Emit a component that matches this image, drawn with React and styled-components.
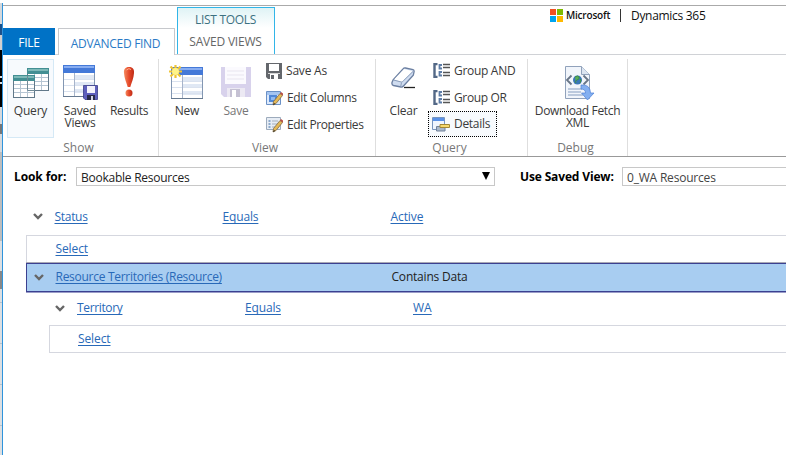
import React from "react";
import styled, { createGlobalStyle } from "styled-components";

const Global = createGlobalStyle`
  * { box-sizing: border-box; }
  body { margin: 0; background: #fff; overflow: hidden; font-family: "Open Sans", "Noto Sans", sans-serif; font-size: 12px; color: #333; }
  svg { display: block; flex: none; }
`;
const Page = styled.div`display: flex; width: 786px; height: 461px; padding: 3px 0 6px; overflow: hidden;`;
const Backdrop = styled.div`
  width: 2px; flex: none;
  background: linear-gradient(#d4d8dc 0 21px, #19508c 21px 32px, #d0d0d0 32px 47px, #000 47px 73px, #ddd 73px 75px, #000 75px 79px, #ddd 79px 81px, #000 81px 104px, #d5d9dd 104px 121px, #777 121px 131px, #d5d9dd 131px 149px, #bdbdbd 149px 238px, #dcdfe2 238px 268px, #888 268px 286px, #dcdfe2 286px 299px, #b9c2ca 299px 300px, #dcdfe2 300px 340px, #b9c2ca 340px 341px, #dcdfe2 341px 381px, #b9c2ca 381px 382px, #dcdfe2 382px 422px, #b9c2ca 422px 423px, #dcdfe2 423px);
`;
const Window = styled.main`width: 784px; flex: none; border-left: 1px solid #2f94dc; padding-top: 2px; background: #fff; display: flex; flex-direction: column;`;
const Header = styled.header`height: 50px; flex: none; border-top: 1px solid #aaa; border-bottom: 1px solid #d0d2d6; display: flex; align-items: flex-end;`;
const Tab = styled.div`
  height: 27px; line-height: 30px; text-align: center; margin-bottom: -1px;
  width: ${p => p.$w}px; letter-spacing: ${p => p.$ls || 0}px;
`;
const FileTab = styled(Tab)`background: #0072c6; color: #fff;`;
const ActiveTab = styled(Tab)`color: #2a7ac6; margin: 0 1px -1px 3px; padding-right: 2px; background: #fff; border: 1px solid #c6c8cc; border-bottom: 0;`;
const ToolTabs = styled.div`
  width: 98px; height: 47px; margin-left: 1px; padding-right: 1px; text-align: center; border: 1px solid #32b5e8; border-bottom: 0;
  background: linear-gradient(#dff3f5, #fff 20px); color: #666;
`;
const ToolTitle = styled.div`height: 22px; line-height: 24px; color: #3c7181; letter-spacing: -0.3px;`;
const ToolName = styled.div`height: 22px; line-height: 24px; letter-spacing: ${p => p.$ls}px;`;
const Brand = styled.div`align-self: flex-start; margin-left: 275px; height: 18px; display: flex; align-items: center; color: #111; white-space: nowrap;`;
const Microsoft = styled.span`font-size: 10px; font-weight: 600; letter-spacing: ${p => p.$ls}px; margin-left: 3px; width: 54px;`;
const BrandBar = styled.span`width: 1px; height: 13px; background: #333; margin-right: 10px;`;
const Dynamics = styled.span`font-size: 12px; font-weight: 500; letter-spacing: ${p => p.$ls}px;`;

const Ribbon = styled.section`height: 102px; flex: none; display: flex; border-bottom: 1px solid #999;`;
const Group = styled.div`
  width: ${p => p.$w}px; padding: 4px 0 0 ${p => p.$pad}px; display: flex; flex-direction: column;
  border-right: 1px solid; border-image: linear-gradient(transparent 5px, #dedede 5px) 1;
`;
const Tools = styled.div`display: flex; height: 79px;`;
const GroupName = styled.div`height: 18px; line-height: 19px; padding-right: 4px; text-align: center; color: #777; margin-left: -${p => p.$pad}px;`;
const BigButton = styled.div`
  width: ${p => p.$w}px; height: 79px; margin-left: ${p => p.$ml || 0}px; padding-top: 5px; border: 1px solid ${p => (p.$hot ? "#d5e9f6" : "transparent")};
  background: ${p => (p.$hot ? "#f7fafd" : "transparent")}; display: flex; flex-direction: column; align-items: center;
`;
const IconSlot = styled.div`height: 40px; display: flex; align-items: flex-start; padding-left: ${p => p.$dx || 0}px;`;
const BigLabel = styled.div`
  line-height: 11.5px; text-align: center; white-space: nowrap;
  color: ${p => (p.$off ? "#777" : "#3a3a3a")}; letter-spacing: ${p => p.$ls || 0}px;
`;
const Stack = styled.div`display: flex; flex-direction: column; margin-left: ${p => p.$ml}px; margin-top: -2px;`;
const SmallButton = styled.div`
  height: ${p => (p.$focus ? 26 : 27)}px; line-height: 24px; width: ${p => p.$w || 110}px; display: flex; align-items: center; gap: 4px; padding-left: ${p => p.$pl ?? 5}px; white-space: nowrap;
  color: #3a3a3a; letter-spacing: ${p => p.$ls || 0}px;
  border: 1px dotted ${p => (p.$focus ? "#000" : "transparent")}; background: ${p => (p.$focus ? "#f7fafd" : "transparent")};
`;

const Lookup = styled.div`height: 40px; flex: none; display: flex; padding: 10px 0 0 11px; overflow: hidden;`;
const FieldName = styled.div`width: ${p => p.$w}px; flex: none; line-height: 20px; font-weight: 700; color: #000; letter-spacing: ${p => p.$ls}px; white-space: nowrap;`;
const Field = styled.div`
  width: ${p => p.$w}px; flex: none; height: 19px; border: 1px solid #c8c8c8; padding: 0 4px; display: flex; justify-content: space-between;
  line-height: 19px; margin-right: 25px; letter-spacing: ${p => p.$ls}px; white-space: nowrap; color: ${p => (p.$soft ? "#444" : "#222")};
  svg { margin-top: 4px; }
`;
const Conditions = styled.div`padding-left: 23px; display: flex; flex-direction: column;`;
const Row = styled.div`
  display: grid; grid-template-columns: ${p => p.$cols}; align-items: center; flex: none;
  margin-left: ${p => p.$indent || 0}px; padding-left: ${p => p.$pad}px; padding-bottom: ${p => p.$pb || 0}px; height: ${p => p.$h}px; white-space: nowrap;
`;
const SelectRow = styled(Row)`border: 1px solid #d5d7df; border-right: 0;`;
const ActiveRow = styled(Row)`background: #a8cdf1; border: 1px solid #3b4090; box-shadow: 0 1px #9a9cc8 , 0 -1px #a9a9b5; border-right: 0; color: #222;`;
const Link = styled.a`
  color: #2869b8; text-decoration: underline; text-underline-offset: 2px; text-decoration-thickness: 1px; justify-self: start;
  text-decoration-skip-ink: none; letter-spacing: ${p => p.$ls || 0}px;
`;
const Words = styled.span`letter-spacing: ${p => p.$ls}px;`;

const Chevron = () => <svg width="10" height="8" viewBox="0 0 10 8"><path d="M1 2 5 6 9 2" fill="none" stroke="#666" strokeWidth="2.400" /></svg>;

const Sheet = ({ x, y, w, h, head, line, head2 }) => (
  <g transform={`translate(${x} ${y})`}>
    <rect x=".5" y=".5" width={w - 1} height={h - 1} fill="#fff" stroke={line} />
    <path d={`M1 9.500H${w - 1}M1 13.500H${w - 1}M1 17.500H${w - 1}M7.500 5V${h - 1}M14.500 5V${h - 1}`} stroke="#b5c5d3" />
    <rect width={w} height="6" fill={head} />
    <rect x="1" y="1" width={w - 2} height="2" fill={head2} />
  </g>
);
const QueryIcon = () => (
  <svg width="36" height="34" viewBox="0 0 36 34">
    <Sheet x={14} y={3} w={22} h={23} head="#438f93" head2="#7eb9b8" line="#61798a" />
    <Sheet x={0} y={10} w={22} h={23} head="#438f93" head2="#7eb9b8" line="#61798a" />
    <path d="M14.500 11V25.500H22" fill="none" stroke="#718b98" />
  </svg>
);
const TableBase = ({ x = 0, y = 0 }) => (
  <g transform={`translate(${x} ${y})`}>
    <rect x=".5" y=".5" width="31" height="31" fill="#fff" stroke="#8397b2" />
    <path d="M12 12H31M12 19H31M12 26H31" stroke="#e0e8f4" strokeWidth="4" />
    <path d="M1 14.500H31M1 20.500H31M1 26.500H31" stroke="#dae2ef" />
    <path d="M11.500 8V31" stroke="#a7b4ca" />
    <rect width="32" height="8" fill="#4479d8" />
    <path d="M1 2H31" stroke="#88adf1" strokeWidth="2" />
    <path d="M0 31.500H32" stroke="#667990" />
  </g>
);
const SavedIcon = () => (
  <svg width="36" height="36" viewBox="0 0 36 36">
    <TableBase />
    <path d="M20.500 20.500h14v14H22l-1.500-1.500z" fill="#5f60bd" stroke="#393b87" strokeWidth=".8" />
    <rect x="24" y="21" width="8" height="7" fill="#f4f3fc" /><rect x="24" y="30" width="8" height="5" fill="#292b49" /><rect x="28" y="31" width="2" height="4" fill="#d5d5e5" />
  </svg>
);
const AlertIcon = () => (
  <svg width="14" height="34" viewBox="0 0 14 34">
    <defs><linearGradient id="red"><stop stopColor="#f58b60" /><stop offset=".5" stopColor="#e6492a" /><stop offset="1" stopColor="#bd2b16" /></linearGradient></defs>
    <path d="M7 2C3 2 1.700 4.500 2 8c.3 5 2.300 9.500 3.700 14h2.600C9.700 17.500 11.700 13 12 8c.3-3.500-1-6-5-6z" fill="url(#red)" />
    <circle cx="7" cy="28" r="3.500" fill="url(#red)" />
    <path d="M4.500 5Q7 2.500 9 4.500" stroke="#ffb294" fill="none" />
  </svg>
);
const NewIcon = () => (
  <svg width="36" height="36" viewBox="0 0 36 36">
    <TableBase x={2} y={2} />
    <path d="M6.500 0v13M0 6.500h13M1.500 1.500l10 10M11.500 1.500l-10 10" stroke="#efc435" strokeWidth="2.200" /><circle cx="6.500" cy="6.500" r="3.500" fill="#fff387" />
  </svg>
);
const DiskIcon = () => (
  <svg width="32" height="34" viewBox="0 0 32 34">
    <path d="M1 2h30v30H4l-3-3z" fill="#d8d2ec" /><path d="M5 2h21v17H5z" fill="#fbfafe" />
    <path d="M7 6h17M7 10h17M7 14h17" stroke="#e8e5ef" /><path d="M7 23h18v9H7z" fill="#ece9f3" /><path d="M10 24h10v8H10z" fill="#c5c1d3" /><path d="M12 25h4v7h-4z" fill="#fff" />
  </svg>
);
const SaveAsIcon = () => (
  <svg width="16" height="16" viewBox="0 0 16 16">
    <path d="M0 0h16v16H2l-2-2z" fill="#64676c" /><path d="M3 1h10v7H3z" fill="#fff" /><path d="M2 10h12v1H2z" fill="#d4d4d4" /><path d="M4 11h8v5H4z" fill="#fff" /><path d="M5 12h3v4H5z" fill="#64676c" />
  </svg>
);
const Pencil = () => (
  <g><path d="M7.500 11.500 14 3.500l2.500 2L10 13.500 7 15z" fill="#e5b957" stroke="#7f6844" strokeWidth=".8" /><path d="m14 3.500 1-1.500 2.500 2-1 1.500z" fill="#b84d43" /><path d="M7 15l1-2 1.200 1z" fill="#222" /></g>
);
const ColumnsIcon = () => (
  <svg width="17" height="16" viewBox="0 0 17 16"><path d="M.5 1.500h14v13H.5z" fill="#dce9fb" stroke="#6b91c6" /><path d="M1 2h13v3H1z" fill="#a5c5f1" /><path d="M3 5h8v7H3z" fill="#5289d7" /><path d="M5 7h4v3H5z" fill="#8fbaf2" /><Pencil /></svg>
);
const PropertiesIcon = () => (
  <svg width="17" height="16" viewBox="0 0 17 16"><path d="M.5.500h14v12H.5z" fill="#e7edf5" stroke="#9dabbc" /><path d="M2.500 4h2m-2 3h2m-2 3h2" stroke="#6f93bd" strokeWidth="1.300" /><path d="M6 4h6M6 7h5M6 10h3" stroke="#a5afbd" /><Pencil /></svg>
);
const EraserIcon = () => (
  <svg width="26" height="34" viewBox="0 0 26 34">
    <path d="M13 22.500h11" stroke="#222" strokeWidth="1.300" />
    <path d="M2 15 12 4q1-1.300 2.500-1l7.500 1.700q1.500.5 1 2.500l-.7 3L12.500 21q-1 1.200-2.500 1L2.500 20.500Q.5 20 1 17.500z" fill="#cfdcf0" stroke="#6b7fa1" strokeWidth="1.300" />
    <path d="M3 14.500 13 4l8.500 2L11 17z" fill="#fff" /><path d="M2.500 15l7.700 2q1 .3 2-1L22 6.500M10.500 17.500l-.8 4" stroke="#8a9dba" fill="none" />
  </svg>
);
const GroupIcon = () => (
  <svg width="17" height="15" viewBox="0 0 17 15"><path d="M4.500 1H1.500v13h3" fill="none" stroke="#536886" strokeWidth="2.400" /><path d="M9 2H6.500v3.500H9M9 9H6.500v3.500H9" fill="none" stroke="#5d7ca6" strokeWidth="1.800" /><path d="M10 1.500h7M10 4.500h7M10 9.500h7M10 12.500h7" stroke="#555" strokeWidth="1.500" /></svg>
);
const DetailsIcon = () => (
  <svg width="18" height="15" viewBox="0 0 18 15"><path d="M.5.500h12v12H.5z" fill="#eff5fe" stroke="#7795bf" /><path d="M1 1h11v3H1z" fill="#5991e7" /><path d="M4.500 9.500h8.500v4.500H4.500z" fill="#a9b8cb" stroke="#71829b" /><path d="M8 7.500h9.500v3H8z" fill="#f6d96c" stroke="#a58834" /></svg>
);
const XmlIcon = () => (
  <svg width="32" height="36" viewBox="0 0 32 36">
    <path d="M2.500 1.500h16l8 8v24h-24z" fill="#f1f5fb" stroke="#91a2bb" /><path d="M18.500 1.500v8h8" fill="#dce5f1" stroke="#91a2bb" /><path d="M5 24h14M5 27h13M5 30h15" stroke="#a9bbd3" strokeWidth="1.600" />
    <path d="M3 10h23v11H3z" fill="#f1f5fb" /><path d="m8.500 10.500-4.500 4.500 4.500 4.500M20.500 10.500l4.500 4.500-4.500 4.500" fill="none" stroke="#687586" strokeWidth="1.800" /><circle cx="14.500" cy="15" r="4.500" fill="#3976b7" /><path d="M12 12q3-2 4 0t-2 3-1 3M17 14l1 1-1 3" fill="#5aad57" stroke="#3c8e4b" />
    <path d="M18 20q9-1 9.500 8h3.500l-6.500 7-6-7h4q0-4-4.500-4z" fill="#83aff0" stroke="#4c80d5" strokeWidth=".7" />
  </svg>
);
const Windows = () => <svg width="13" height="13" viewBox="0 0 13 13"><path fill="#f25022" d="M0 0h6v6H0z" /><path fill="#7fba00" d="M7 0h6v6H7z" /><path fill="#00a4ef" d="M0 7h6v6H0z" /><path fill="#ffb900" d="M7 7h6v6H7z" /></svg>;

export default function App() {
  return (
    <><Global /><Page><Backdrop /><Window>
      <Header>
        <FileTab $w={52} $ls={-0.2}>FILE</FileTab>
        <ActiveTab $w={117} $ls={-0.3}>ADVANCED FIND</ActiveTab>
        <ToolTabs><ToolTitle>LIST TOOLS</ToolTitle><ToolName $ls={-0.2}>SAVED VIEWS</ToolName></ToolTabs>
        <Brand><Windows /><Microsoft $ls={-0.2}>Microsoft</Microsoft><BrandBar /><Dynamics $ls={-0.3}>Dynamics 365</Dynamics></Brand>
      </Header>
      <Ribbon>
        <Group $w={156} $pad={4}><Tools>
          <BigButton $w={47} $hot><IconSlot><QueryIcon /></IconSlot><BigLabel $ls={-0.2}>Query</BigLabel></BigButton>
          <BigButton $w={50} $ml={1}><IconSlot $dx={1}><SavedIcon /></IconSlot><BigLabel $ls={-0.2}>Saved<br />Views</BigLabel></BigButton>
          <BigButton $w={48}><IconSlot><AlertIcon /></IconSlot><BigLabel $ls={-0.3}>Results</BigLabel></BigButton>
        </Tools><GroupName $pad={4}>Show</GroupName></Group>
        <Group $w={217} $pad={4}><Tools>
          <BigButton $w={48}><IconSlot><NewIcon /></IconSlot><BigLabel $ls={-0.2}>New</BigLabel></BigButton>
          <BigButton $w={50}><IconSlot><DiskIcon /></IconSlot><BigLabel $off $ls={-0.2}>Save</BigLabel></BigButton>
          <Stack $ml={-1}>
            <SmallButton $ls={-0.2}><SaveAsIcon />Save As</SmallButton>
            <SmallButton $ls={-0.35}><ColumnsIcon />Edit Columns</SmallButton>
            <SmallButton $ls={-0.4}><PropertiesIcon />Edit Properties</SmallButton>
          </Stack>
        </Tools><GroupName $pad={4}>View</GroupName></Group>
        <Group $w={152} $pad={4}><Tools>
          <BigButton $w={47}><IconSlot><EraserIcon /></IconSlot><BigLabel $ls={-0.2}>Clear</BigLabel></BigButton>
          <Stack $ml={1}>
            <SmallButton $w={96} $ls={-0.3} $pl={4}><GroupIcon />Group AND</SmallButton>
            <SmallButton $w={96} $ls={-0.35} $pl={4}><GroupIcon />Group OR</SmallButton>
            <SmallButton $w={69} $focus $ls={-0.3} $pl={3}><DetailsIcon />Details</SmallButton>
          </Stack>
        </Tools><GroupName $pad={4}>Query</GroupName></Group>
        <Group $w={100} $pad={4}><Tools>
          <BigButton $w={91}><IconSlot $dx={2}><XmlIcon /></IconSlot><BigLabel $ls={-0.35}>Download Fetch<br />XML</BigLabel></BigButton>
        </Tools><GroupName $pad={4}>Debug</GroupName></Group>
      </Ribbon>
      <Lookup>
        <FieldName $w={62} $ls={-0.1}>Look for:</FieldName>
        <Field $w={419} $ls={-0.25}>Bookable Resources<svg width="8" height="8" viewBox="0 0 8 8"><path d="M0 0h8L4 8z" fill="#000" /></svg></Field>
        <FieldName $w={102} $ls={-0.15}>Use Saved View:</FieldName>
        <Field $w={200} $ls={-0.2} $soft>0_WA Resources</Field>
      </Lookup>
      <Conditions>
        <Row $cols="22px 168px 168px auto" $pad={6.5} $h={38}><Chevron /><Link $ls={-0.3}>Status</Link><Link $ls={-0.15}>Equals</Link><Link $ls={-0.1}>Active</Link></Row>
        <SelectRow $cols="auto" $pad={28.5} $h={28} $pb={2}><Link $ls={-0.1}>Select</Link></SelectRow>
        <ActiveRow $cols="22px 336px auto" $pad={6.5} $h={29} $pb={2}><Chevron /><Link $ls={-0.28}>Resource Territories (Resource)</Link><Words $ls={-0.2}>Contains Data</Words></ActiveRow>
        <Row $cols="22px 168px 168px auto" $indent={23} $pad={6} $h={33} $pb={2}><Chevron /><Link $ls={-0.35}>Territory</Link><Link $ls={-0.15}>Equals</Link><Link>WA</Link></Row>
        <SelectRow $cols="auto" $indent={23} $pad={28} $h={28} $pb={1}><Link $ls={-0.1}>Select</Link></SelectRow>
      </Conditions>
    </Window></Page></>
  );
}
